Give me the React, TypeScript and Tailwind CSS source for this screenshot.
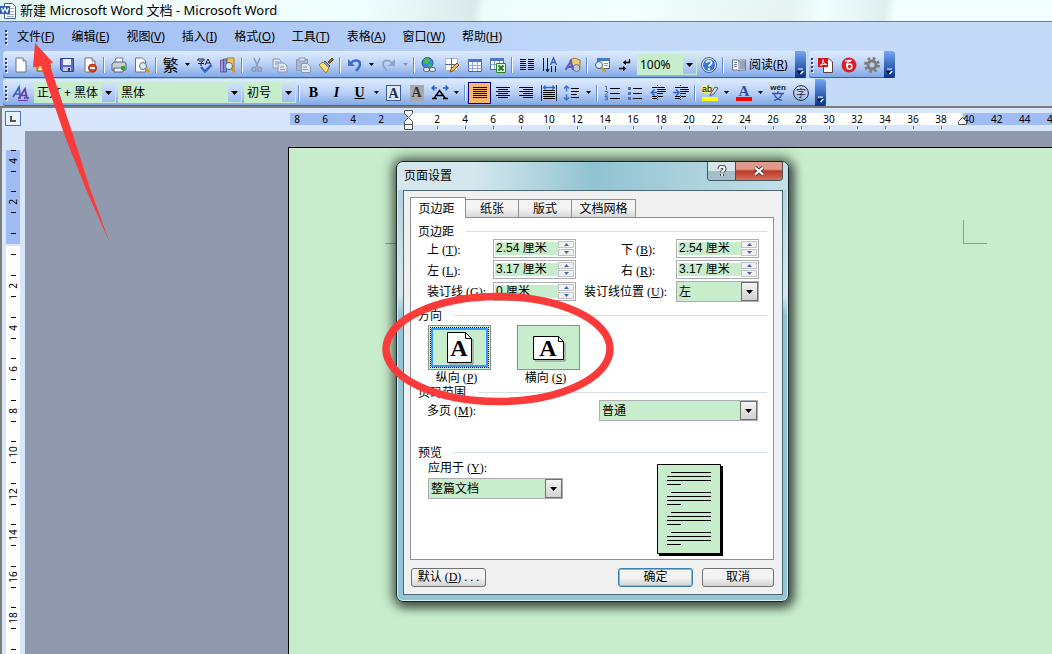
import { useState } from "react";
import type { ReactNode } from "react";

const menus = [
  ["文件", "F"],
  ["编辑", "E"],
  ["视图", "V"],
  ["插入", "I"],
  ["格式", "O"],
  ["工具", "T"],
  ["表格", "A"],
  ["窗口", "W"],
  ["帮助", "H"],
];

const leftMarks = [8, 6, 4, 2];
const textMarks = Array.from({ length: 19 }, (_, i) => (i + 1) * 2);
const rightMarks = [40, 42, 44, 46];
const pageMarks = Array.from({ length: 9 }, (_, i) => (i + 1) * 2);

function Svg({ children }: { children: ReactNode }) {
  return (
    <svg viewBox="0 0 16 16" className="h-4 w-4 shrink-0 overflow-visible" fill="none" aria-hidden="true">
      {children}
    </svg>
  );
}

function Tool({ label, active, children }: { label: string; active?: boolean; children: ReactNode }) {
  return (
    <button
      type="button"
      aria-label={label}
      className={`flex h-[22px] w-[23px] shrink-0 items-center justify-center ${
        active ? "border border-[#000080] bg-[#ffb668]" : ""
      }`}
    >
      <Svg>{children}</Svg>
    </button>
  );
}

function More({ label, dim }: { label: string; dim?: boolean }) {
  return (
    <button type="button" aria-label={label} className="flex h-[22px] w-[11px] shrink-0 items-center justify-center">
      <svg viewBox="0 0 5 3" className="h-[3px] w-[5px]" aria-hidden="true">
        <path d="M0 0h5L2.500 3z" fill={dim ? "#8a93a3" : "#000"} />
      </svg>
    </button>
  );
}

function Sep() {
  return (
    <span className="flex w-[6px] shrink-0 justify-center">
      <span className="h-4 w-px bg-[#6a8ccb]" />
      <span className="h-4 w-px bg-[#f1f6ff]" />
    </span>
  );
}

function Grip() {
  return (
    <span className="flex w-[6px] shrink-0 flex-col items-center gap-[2px]">
      {[0, 1, 2, 3].map((i) => (
        <span key={i} className="h-[2px] w-[2px] bg-[#27417a] shadow-[1px_1px_0_#fff]" />
      ))}
    </span>
  );
}

function EndCap() {
  return (
    <button
      type="button"
      aria-label="工具栏选项"
      className="flex h-[27px] w-[11px] shrink-0 items-end justify-center rounded-r-[3px] bg-linear-to-b from-[#76a7f2] to-[#05328c] pb-[3px]"
    >
      <svg viewBox="0 0 7 7" className="h-[7px] w-[7px]" aria-hidden="true">
        <path d="M1 1h5" stroke="#fff" />
        <path d="M1 3h6L4 6.500z" fill="#fff" />
        <path d="M0 3h5L2.500 6z" fill="#000" />
      </svg>
    </button>
  );
}

function Bar({ children }: { children: ReactNode }) {
  return (
    <div
      role="toolbar"
      className="flex h-[27px] shrink-0 items-center rounded-l-[3px] bg-linear-to-b from-[#dfebfe] via-[#b9d1f7] to-[#7da5e4] shadow-[inset_0_-1px_0_#3b61a6]"
    >
      {children}
    </div>
  );
}

function BarSelect({ label, value, width }: { label: string; value: string; width: string }) {
  return (
    <span className={`relative flex h-[21px] shrink-0 border border-[#c7edcc] bg-[#c7edcc] ${width}`}>
      <select
        aria-label={label}
        className="h-full min-w-0 flex-1 appearance-none overflow-hidden bg-transparent pl-[2px] text-xs whitespace-nowrap outline-none"
      >
        <option>{value}</option>
      </select>
      <span className="pointer-events-none flex w-[13px] shrink-0 items-center justify-center bg-linear-to-b from-[#d2e2fb] to-[#9dbdf0]">
        <svg viewBox="0 0 7 4" className="h-1 w-[7px]" aria-hidden="true">
          <path d="M0 0h7L3.500 4z" fill="#000" />
        </svg>
      </span>
    </span>
  );
}

function Sheet() {
  return (
    <>
      <path d="M3 1h7l3 3v11H3z" fill="#fff" stroke="#6f7480" />
      <path d="M10 1v3h3" stroke="#6f7480" fill="#dfe5ee" />
    </>
  );
}

function Lines({ rows }: { rows: number[][] }) {
  return (
    <>
      {rows.map(([x, y, w]) => (
        <path key={`${x}-${y}`} d={`M${x} ${y}.5h${w}`} stroke="#000" />
      ))}
    </>
  );
}

function Lens() {
  return (
    <>
      <path d="M11.500 11.500l3.500 3.500" stroke="#d8932c" strokeWidth="2.500" />
      <circle cx="9" cy="9" r="3.500" fill="#d3effc" stroke="#5b6b80" />
    </>
  );
}

function StandardBar() {
  return (
    <Bar>
      <Grip />
      <Tool label="新建">
        <Sheet />
      </Tool>
      <Tool label="打开">
        <path d="M1 4h5l1 2h6v8H1z" fill="#e8b850" stroke="#9a6b18" />
        <path d="M3 8h12l-2 6H1z" fill="#ffdf86" stroke="#9a6b18" />
      </Tool>
      <Tool label="保存">
        <path d="M1.500 1.500h13v13h-11l-2-2z" fill="#5d6bd0" stroke="#343f91" />
        <path d="M4 2h8v6H4z" fill="#eef1ff" />
        <path d="M4 10h8v4H4z" fill="#c8cbe0" />
        <path d="M9 11h2v3H9z" fill="#2a3470" />
      </Tool>
      <Tool label="权限">
        <Sheet />
        <circle cx="10.500" cy="11" r="4" fill="#e5481c" stroke="#b22b0a" />
        <path d="M8 11h5" stroke="#fff" strokeWidth="2" />
      </Tool>
      <Sep />
      <Tool label="打印">
        <path d="M5 1h7l-1 6H3z" fill="#fff" stroke="#758297" />
        <path d="M1 7l2-2h11l1 2v6H1z" fill="#c7cfda" stroke="#56637a" />
        <path d="M3 11h9v4H3z" fill="#eef3f7" stroke="#56637a" />
        <path d="M10 9h4v4h-4z" fill="#35a635" />
      </Tool>
      <Tool label="打印预览">
        <path d="M1.500 1h7l3 3v11h-10z" fill="#fff" stroke="#6f7480" />
        <Lens />
      </Tool>
      <Sep />
      <button type="button" className="h-[22px] w-[23px] shrink-0 text-base leading-[20px]">
        繁
      </button>
      <More label="中文转换" />
      <Tool label="拼写和语法">
        <path d="M1 2h6M1 2v2M7 2v2M2 4h4L4 6v3M1 6.500h6M8 8l3-6 3 6M9 6h4" stroke="#1a1a2a" />
        <path d="M4 10l4 4.500L14.500 8" stroke="#3767c6" strokeWidth="2.500" />
      </Tool>
      <Tool label="信息检索">
        <path d="M0.500 3h3v12h-3z" fill="#a894dc" stroke="#6c58a8" />
        <path d="M3.500 2h3v13h-3z" fill="#7e8fe0" stroke="#4b57a0" />
        <path d="M7 1h7v11H7z" fill="#efc25a" stroke="#a77a20" />
        <Lens />
      </Tool>
      <Sep />
      <Tool label="剪切">
        <path d="M5 1l4 9M11 1L7 10" stroke="#8b98b0" strokeWidth="1.500" />
        <circle cx="5" cy="12.500" r="2" stroke="#8b98b0" strokeWidth="1.500" />
        <circle cx="10.500" cy="12.500" r="2" stroke="#8b98b0" strokeWidth="1.500" />
      </Tool>
      <Tool label="复制">
        <path d="M1 2h6l2 2v7H1z" fill="#dce5f3" stroke="#8b98b0" />
        <path d="M6 6h6l3 3v6H6z" fill="#dce5f3" stroke="#8b98b0" />
        <path d="M3 5h4M3 7h2M8 10h4M8 12.500h5" stroke="#8b98b0" />
      </Tool>
      <Tool label="粘贴">
        <path d="M1.500 2.500h11v11h-11z" fill="#a9b6cb" stroke="#8b98b0" />
        <path d="M4 1h6v3H4z" fill="#dce5f3" stroke="#8b98b0" />
        <path d="M6.500 6.500h6l3 3v6h-9z" fill="#dce5f3" stroke="#8b98b0" />
        <path d="M8 10h4M8 12.500h5" stroke="#8b98b0" />
      </Tool>
      <Tool label="格式刷">
        <path d="M10 5l4-4 1.500 1.500-4 4z" fill="#9c6b35" stroke="#5b3a18" />
        <path d="M7 4l5 5-2 2-5-5z" fill="#8d93c4" stroke="#4f5487" />
        <path d="M5 5l6 6-3 5-7-8z" fill="#ffe06c" stroke="#a47a1a" />
      </Tool>
      <Sep />
      <Tool label="撤消">
        <path d="M4 6c3-4 9-3 9 1 0 3-2 5-4 7" stroke="#3b6dd0" strokeWidth="2.500" />
        <path d="M1 2v7h7z" fill="#3b6dd0" />
      </Tool>
      <More label="撤消列表" />
      <Tool label="恢复">
        <path d="M11 6C8 2 2 3 2 7c0 3 2 5 4 7" stroke="#93a5c6" strokeWidth="2" />
        <path d="M14 2v7H7z" fill="#93a5c6" />
      </Tool>
      <More label="恢复列表" dim />
      <Sep />
      <Tool label="超链接">
        <circle cx="6.500" cy="6" r="5.500" fill="#388ad8" stroke="#24609b" />
        <path d="M3 2l4-1 2 3-3 3-3-1zM7 8l4-1-2 4z" fill="#4eba4e" />
        <rect x="2.500" y="10.500" width="6" height="4" rx="2" fill="#e4e8ee" stroke="#4f5d70" />
        <rect x="8.500" y="10.500" width="6" height="4" rx="2" fill="#e4e8ee" stroke="#4f5d70" />
      </Tool>
      <Tool label="表格和边框">
        <path d="M1.500 1.500h12v12h-12z" fill="#fff" stroke="#aab4c5" />
        <path d="M7.500 1.500v12M1.500 7.500h12" stroke="#59657a" />
        <path d="M13 6l2 2-6 6-3 1 1-3z" fill="#f2b84d" stroke="#86551b" />
      </Tool>
      <Tool label="插入表格">
        <path d="M1.500 2.500h13v12h-13z" fill="#fff" stroke="#4469ac" />
        <path d="M1 2h14v3H1z" fill="#4b77c8" />
        <path d="M1.500 8.500h13M1.500 11.500h13M5.500 5v9M10.500 5v9" stroke="#8aa5d6" />
      </Tool>
      <Tool label="插入 Excel 工作表">
        <path d="M0.500 1.500h13v11h-13z" fill="#fff" stroke="#4469ac" />
        <path d="M0 1h14v3H0z" fill="#4b77c8" />
        <path d="M0.500 7.500h13M4.500 4v8M9.500 4v8" stroke="#8aa5d6" />
        <path d="M6.500 6.500h9v9h-9z" fill="#e5f5df" stroke="#2c812c" />
        <path d="M8.500 8.500l5 5M13.500 8.500l-5 5" stroke="#1f7a22" strokeWidth="2" />
      </Tool>
      <Sep />
      <Tool label="分栏">
        <Lines
          rows={[2, 4, 6, 8, 10, 12].flatMap((y) => [
            [1, y, 6],
            [9, y, 6],
          ])}
        />
      </Tool>
      <Tool label="更改文字方向">
        <path d="M1.500 1v13M5.500 1v13M9.500 9v6M13.500 9v6M4 12l1.500 3 1.500-3" stroke="#111" />
        <path d="M8.500 8l3-7 3 7M9.500 5.500h4" stroke="#3a5da8" strokeWidth="1.300" />
      </Tool>
      <Tool label="绘图">
        <path d="M5 3l4-2 6 2v8l-4 2-6-3z" fill="#f3cb72" stroke="#9b7730" />
        <circle cx="11.500" cy="11" r="3.500" fill="#bfc9d9" stroke="#667389" />
        <path d="M0.500 13L6 4l2 9M2 10h5.500" stroke="#5b5bd0" strokeWidth="2" />
      </Tool>
      <Sep />
      <Tool label="文档结构图">
        <path d="M3.500 1.500h12v10h-12z" fill="#fff" stroke="#4469ac" />
        <path d="M3 1h13v3H3z" fill="#4b77c8" />
        <path d="M10 6.500h4M10 8.500h4" stroke="#7c93bd" />
        <circle cx="5" cy="8" r="3.500" fill="#d3effc" stroke="#4d617c" />
        <path d="M7.500 10.500l4 4" stroke="#d8932c" strokeWidth="2.500" />
      </Tool>
      <Tool label="显示/隐藏编辑标记">
        <path d="M12.500 2v3.500h-4M2 11.500h5" stroke="#000" strokeWidth="1.300" />
        <path d="M9 3v5L5.500 5.500zM6 9v5l3.500-2.500z" fill="#000" />
      </Tool>
      <span className="w-px shrink-0" />
      <BarSelect label="显示比例" value="100%" width="w-[60px]" />
      <Tool label="帮助">
        <circle cx="8" cy="8" r="6.500" fill="#3b78d8" stroke="#fff" />
        <circle cx="8" cy="8" r="7.500" stroke="#3767b8" />
        <path d="M5.500 6c0-3 5-3 5 0 0 1.500-2.500 1.500-2.500 3.500M8 11v2" stroke="#fff" strokeWidth="1.700" />
      </Tool>
      <Sep />
      <button type="button" className="flex h-[22px] shrink-0 items-center gap-[2px] pr-[7px] pl-[5px] text-xs whitespace-nowrap">
        <Svg>
          <path d="M1.500 3h5L8 4l1.500-1h5v10h-5L8 14l-1.500-1h-5z" fill="#fff" stroke="#68758b" />
          <path d="M8 4v10M3 5.500h3M3 7.500h3M3 9.500h3" stroke="#68758b" />
          <path d="M9 4h5v8H9z" fill="#98a4b6" />
        </Svg>
        <span>
          阅读(<u>R</u>)
        </span>
      </button>
      <EndCap />
    </Bar>
  );
}

function PdfBar() {
  return (
    <Bar>
      <Grip />
      <Tool label="PDF">
        <path d="M5.500 2h6l3 3v10.500h-9z" fill="#fff" stroke="#5c3e3e" />
        <path d="M0 1h10v9H0z" fill="#d4131b" />
        <path d="M2 8.500c3-1 3-4 3-6 0 3 1 4 3.500 5-2-.5-4 0-6.500 1z" stroke="#fff" />
      </Tool>
      <Tool label="转换">
        <circle cx="8" cy="8" r="7.500" fill="#dc1f2b" />
        <path d="M4 4c2 0 4-1 7-.5M10 4C6 4 5 7 6 10" stroke="#fff" strokeWidth="1.200" />
        <circle cx="8.500" cy="9.500" r="2.500" stroke="#fff" strokeWidth="1.400" />
      </Tool>
      <Tool label="设置">
        <circle cx="8" cy="8" r="4" stroke="#7d7d7d" strokeWidth="3" />
        <circle cx="8" cy="8" r="6.500" stroke="#7d7d7d" strokeWidth="3" strokeDasharray="2.600 2.500" />
      </Tool>
      <EndCap />
    </Bar>
  );
}

function FormatBar() {
  return (
    <Bar>
      <Grip />
      <Tool label="样式和格式">
        <path d="M0 12L6 2l1 9M2 9h5" stroke="#3a62c0" strokeWidth="1.700" />
        <path d="M6 13l6-9 2 9M8 10.500h5.500M5 13h3M11 13h5" stroke="#6a3aa8" strokeWidth="1.700" />
        <path d="M5 15.500h10" stroke="#6a3aa8" />
      </Tool>
      <div className="flex gap-[2px] pl-[2px]">
        <BarSelect label="样式" value="正文 + 黑体" width="w-[82px]" />
        <BarSelect label="字体" value="黑体" width="w-[124px]" />
        <BarSelect label="字号" value="初号" width="w-[52px]" />
      </div>
      <Sep />
      <button type="button" className="h-[22px] w-[23px] shrink-0 font-['Liberation_Serif',serif] text-sm font-bold">
        B
      </button>
      <button type="button" className="h-[22px] w-[23px] shrink-0 font-['Liberation_Serif',serif] text-sm font-bold italic">
        I
      </button>
      <button type="button" className="h-[22px] w-[23px] shrink-0 font-['Liberation_Serif',serif] text-sm font-bold underline">
        U
      </button>
      <More label="下划线" />
      <button type="button" aria-label="字符边框" className="flex w-[23px] shrink-0 justify-center">
        <span className="h-4 w-[15px] border border-[#3f5f91] bg-[#dbe8fb] font-['Liberation_Serif',serif] text-sm leading-[15px] font-bold text-[#26304a]">
          A
        </span>
      </button>
      <button type="button" aria-label="字符底纹" className="flex w-[23px] shrink-0 justify-center">
        <span className="h-4 w-[14px] bg-[#a9a9a9] font-['Liberation_Serif',serif] text-sm leading-4 font-bold text-[#333]">A</span>
      </button>
      <Tool label="字符缩放">
        <path d="M2 13.500l5.500-8 6 8M5 10.500h6M0 13.500h5M11 13.500h5" stroke="#000" strokeWidth="1.500" />
        <path d="M0 3h5M11 3h5M2.500 0.500L0 3l2.500 2.500M13.500 0.500L16 3l-2.500 2.500" stroke="#1f5ed0" strokeWidth="1.300" />
      </Tool>
      <More label="字符缩放列表" />
      <Sep />
      <Tool label="两端对齐" active>
        <Lines rows={[2, 4, 6, 8, 10, 12].map((y) => [1, y, 14])} />
      </Tool>
      <Tool label="居中">
        <Lines rows={[[1, 2, 14], [3, 4, 10], [1, 6, 14], [3, 8, 10], [1, 10, 14], [3, 12, 10]]} />
      </Tool>
      <Tool label="右对齐">
        <Lines rows={[[1, 2, 14], [5, 4, 10], [1, 6, 14], [5, 8, 10], [1, 10, 14], [5, 12, 10]]} />
      </Tool>
      <Tool label="分散对齐">
        <path d="M0.500 0v16M15.500 0v16" stroke="#26324d" />
        <path d="M2 2.500h12M4.500 0.500l-2 2 2 2M11.500 0.500l2 2-2 2" stroke="#2f67d2" strokeWidth="1.300" />
        <Lines rows={[5, 7, 9, 11, 13].map((y) => [2, y, 12])} />
      </Tool>
      <Tool label="行距">
        <path d="M2.500 1v5.500M2.500 9.500V15M0 3.500L2.500 1 5 3.500M0 12.500L2.500 15 5 12.500" stroke="#3e6fca" strokeWidth="1.500" />
        <Lines rows={[[7, 3, 8], [7, 6, 8], [7, 9, 6], [7, 12, 8]]} />
      </Tool>
      <More label="行距列表" />
      <Sep />
      <Tool label="编号">
        <path d="M1 1.500h1.500V5M0.500 6.500h3v1.500L1 10h3M0.500 11.500h3V15h-3M1 13h2.500" stroke="#4a72bd" />
        <Lines rows={[[6, 3, 10], [6, 8, 10], [6, 13, 10]]} />
      </Tool>
      <Tool label="项目符号">
        <path d="M1 2h3v3H1zM1 7h3v3H1zM1 12h3v3H1z" fill="#4a72bd" />
        <Lines rows={[[6, 3, 9], [6, 8, 9], [6, 13, 9]]} />
      </Tool>
      <Tool label="减少缩进量">
        <Lines rows={[[2, 2, 5], [8, 2, 7], [8, 4, 8], [8, 6, 8], [8, 8, 5], [2, 11, 5], [8, 11, 5], [2, 13, 5]]} />
        <path d="M7.500 0v16" stroke="#333" strokeDasharray="1 1" />
        <path d="M7 7.500H2M4.500 4.500l-3 3 3 3" stroke="#2f67d2" strokeWidth="1.700" />
      </Tool>
      <Tool label="增加缩进量">
        <Lines rows={[[2, 2, 5], [8, 2, 7], [8, 4, 8], [8, 6, 8], [8, 8, 5], [2, 11, 5], [8, 11, 5], [2, 13, 5]]} />
        <path d="M7.500 0v16" stroke="#333" strokeDasharray="1 1" />
        <path d="M0 7.500h5M3 4.500l3 3-3 3" stroke="#2f67d2" strokeWidth="1.700" />
      </Tool>
      <Sep />
      <Tool label="突出显示">
        <path d="M0 0h9v8H0z" fill="#f7ef84" />
        <text x="0" y="7" fontSize="9" fontFamily="Liberation Sans" fill="#000">ab</text>
        <path d="M9 8l4-6 3 1-4 6-4 2z" fill="#d5dce8" stroke="#4c5e84" />
        <path d="M0 12h16v4H0z" fill="#ffff00" />
      </Tool>
      <More label="突出显示颜色" />
      <Tool label="字体颜色">
        <text x="8" y="11" fontSize="15" fontWeight="bold" fontFamily="Liberation Serif" textAnchor="middle" fill="#2f4fa0">A</text>
        <path d="M0 12h16v4H0z" fill="#ff0000" />
      </Tool>
      <More label="字体颜色列表" />
      <Tool label="拼音指南">
        <text x="8" y="5" fontSize="8" fontWeight="bold" fontFamily="Liberation Sans" textAnchor="middle" fill="#222">wén</text>
        <path d="M2 8.500h12M8 6v2.500M4 9c1 3 4 5.500 8 6.500M12 9c-1 3-4 5.500-8 6.500" stroke="#3a50b0" strokeWidth="1.300" />
      </Tool>
      <Tool label="带圈字符">
        <circle cx="8" cy="8" r="7.400" stroke="#1b2333" />
        <text x="8" y="12" fontSize="10" fontFamily="Noto Sans CJK SC" textAnchor="middle" fill="#1b2333">字</text>
      </Tool>
      <span className="w-[3px]" />
      <EndCap />
    </Bar>
  );
}

function HorizontalRuler() {
  return (
    <div className="flex h-[23px] shrink-0 overflow-hidden bg-[#d8e6fb] text-[10px] leading-3">
      <div className="w-[288px] shrink-0 pt-[3px] pl-[3px]">
        <button type="button" aria-label="制表符" className="flex h-[15px] w-4 items-center justify-center border border-[#4a78c4] bg-[#e8f1fd]">
          <svg viewBox="0 0 6 6" className="h-[6px] w-[6px]" aria-hidden="true">
            <path d="M1 0v5h5" stroke="#555" strokeWidth="2" fill="none" />
          </svg>
        </button>
      </div>
      <div className="mt-[5px] flex h-3 w-[118px] shrink-0 justify-end bg-[#9fbcf4] pr-[13px]">
        {leftMarks.map((n) => (
          <span key={n} className="w-7 shrink-0 text-center first:w-5 first:pr-2">{n}</span>
        ))}
      </div>
      <div className="relative mt-[5px] flex w-[553px] shrink-0 pl-[15px]">
        <div className="absolute inset-x-0 top-0 h-3 bg-white" />
        <svg viewBox="0 0 9 21" className="absolute -top-[3px] -left-1 h-[21px] w-[9px]" aria-hidden="true">
          <path d="M0.500 0.500h8v3l-4 4-4-4zM0.500 14.500v-3l4-4 4 4v3zM0.500 14.500h8v5h-8z" fill="#f4f4f4" stroke="#555" />
        </svg>
        <svg viewBox="0 0 9 8" className="absolute top-[4px] -right-[6px] z-10 h-2 w-[9px]" aria-hidden="true">
          <path d="M0.500 7.500v-3l4-4 4 4v3z" fill="#f4f4f4" stroke="#555" />
        </svg>
        {textMarks.map((n) => (
          <span key={n} className="relative flex w-7 shrink-0 flex-col items-center">
            <span>{n}</span>
            <span className="mt-px h-[3px] w-px bg-[#777]" />
          </span>
        ))}
      </div>
      <div className="mt-[5px] ml-[2px] flex h-3 min-w-0 flex-1 overflow-hidden bg-[#9fbcf4]">
        {rightMarks.map((n) => (
          <span key={n} className="w-7 shrink-0">{n}</span>
        ))}
      </div>
    </div>
  );
}

function VerticalMark({ n }: { n: number }) {
  return (
    <div className="flex w-full shrink-0 flex-col items-center justify-center odd:h-[41px] even:h-[42px]">
      <span className="h-px w-[5px] bg-black" />
      <span className="flex h-5 -rotate-90 items-center text-[10px] leading-3">{n}</span>
      <span className="h-px w-[5px] bg-black" />
    </div>
  );
}

function VerticalRuler() {
  return (
    <div className="flex w-[23px] shrink-0 flex-col overflow-hidden bg-[#d8e6fb] pt-[19px] pr-[5px] pl-[4px]">
      <div className="flex h-[94px] shrink-0 flex-col items-center justify-end overflow-hidden bg-[#9fbcf4]">
        <VerticalMark n={4} />
        <VerticalMark n={2} />
        <span className="mt-[10px] mb-[10px] h-px w-[5px] shrink-0 bg-black" />
      </div>
      <div className="mt-[2px] flex min-h-0 flex-1 flex-col items-center overflow-hidden bg-white">
        <span className="mt-2 mb-[10px] h-px w-[5px] shrink-0 bg-black" />
        {pageMarks.map((n) => (
          <VerticalMark key={n} n={n} />
        ))}
        <span className="mt-[10px] h-px w-[5px] shrink-0 bg-black" />
      </div>
    </div>
  );
}

function Key({ k, tail = ":" }: { k: string; tail?: string }) {
  return (
    <span className="pl-[3px] font-['Liberation_Serif',serif]">
      (<u>{k}</u>){tail}
    </span>
  );
}

function Legend({ children }: { children: ReactNode }) {
  return (
    <div className="flex h-4 items-center gap-3">
      <span className="shrink-0 pt-[2px]">{children}</span>
      <span className="h-px flex-1 bg-[#d5dfe8]" />
    </div>
  );
}

function Spinner({ id, initial }: { id: string; initial: string }) {
  const [value, setValue] = useState(initial);
  return (
    <span className="flex h-[19px] w-[83px] border border-[#abadb3] bg-white p-px">
      <input
        id={id}
        value={value}
        onChange={(e) => setValue(e.target.value)}
        className="h-[13px] min-w-0 flex-1 self-center bg-[#c7edcc] pl-px text-xs leading-[13px] outline-none"
      />
      <span className="flex w-4 shrink-0 flex-col gap-px">
        {["M0 3L2.500 0 5 3z", "M0 0h5L2.500 3z"].map((d, i) => (
          <button
            key={d}
            type="button"
            aria-label={i === 0 ? "增加" : "减少"}
            className="flex flex-1 items-center justify-center border border-[#c3c4c8] bg-[#f1f1f1]"
          >
            <svg viewBox="0 0 5 3" className="h-[3px] w-[5px]" aria-hidden="true">
              <path d={d} fill="#4b62b8" />
            </svg>
          </button>
        ))}
      </span>
    </span>
  );
}

function DialogSelect({ id, options, width }: { id: string; options: string[]; width: string }) {
  return (
    <span className={`relative flex h-[21px] border border-[#abadb3] bg-[#c7edcc] ${width}`}>
      <select id={id} className="h-full min-w-0 flex-1 appearance-none bg-transparent pl-[2px] text-xs outline-none">
        {options.map((o) => (
          <option key={o}>{o}</option>
        ))}
      </select>
      <span className="pointer-events-none flex w-[17px] shrink-0 items-center justify-center border border-[#707070] bg-linear-to-b from-[#f4f4f4] to-[#d2d2d2]">
        <svg viewBox="0 0 7 4" className="h-1 w-[7px]" aria-hidden="true">
          <path d="M0 0h7L3.500 4z" fill="#000" />
        </svg>
      </span>
    </span>
  );
}

function Orientation({
  wide,
  selected,
  onSelect,
  children,
}: {
  wide?: boolean;
  selected: boolean;
  onSelect: () => void;
  children: ReactNode;
}) {
  return (
    <button type="button" aria-pressed={selected} onClick={onSelect} className="flex w-[63px] flex-col">
      <span className="flex h-[45px] w-full border border-[#8c9096] bg-[#c7edcc] p-px">
        <span className={`flex flex-1 border border-dotted ${selected ? "border-black" : "border-transparent"}`}>
          <span className={`flex flex-1 items-center justify-center border-2 ${selected ? "border-[#3399ff]" : "border-transparent"}`}>
            <svg viewBox="0 0 34 34" className="h-[34px] w-[34px]" aria-hidden="true">
              {wide ? (
                <>
                  <path d="M3 30h30V12" stroke="#888" fill="none" />
                  <path d="M1.500 5.500h25l5 5v18h-30z" fill="#fff" stroke="#000" />
                  <path d="M26.500 5.500v5h5" fill="none" stroke="#000" />
                </>
              ) : (
                <>
                  <path d="M6 33h24V8" stroke="#888" fill="none" />
                  <path d="M4.500 1.500h18l6 6v24h-24z" fill="#fff" stroke="#000" />
                  <path d="M22.500 1.500v6h6" fill="none" stroke="#000" />
                </>
              )}
              <text x="16" y="25" fontSize="24" fontWeight="bold" fontFamily="Liberation Serif" textAnchor="middle">
                A
              </text>
            </svg>
          </span>
        </span>
      </span>
      <span className="h-[14px] w-full pt-px pr-[6px] text-center leading-[14px]">{children}</span>
    </button>
  );
}

function PreviewSheet() {
  return (
    <svg viewBox="0 0 66 92" className="mt-1 h-[92px] w-[66px]" role="img" aria-label="预览">
      <path d="M2 2h64v90H2z" fill="#000" />
      <path d="M0.500 0.500h63v89h-63z" fill="#c7edcc" stroke="#000" />
      {[8, 28, 48, 68].map((y) => (
        <path
          key={y}
          d={`M14 ${y + 0.5}h40M10 ${y + 4.5}h44M10 ${y + 8.5}h44M10 ${y + 12.5}h14`}
          stroke="#000"
        />
      ))}
    </svg>
  );
}

const tabs = [
  ["页边距", "w-[56px]"],
  ["纸张", "w-[54px]"],
  ["版式", "w-[54px]"],
  ["文档网格", "w-[65px]"],
];

const dialogButton =
  "h-[19px] rounded-[3px] border bg-linear-to-b from-[#f4f4f4] from-50% to-[#d4d4d4] to-100% text-center leading-[17px]";

function PageSetupDialog() {
  const [portrait, setPortrait] = useState(true);
  return (
    <section
      role="dialog"
      aria-label="页面设置"
      className="absolute top-[161px] left-[396px] w-[393px] rounded-[7px] border border-[#17242b] bg-linear-to-b from-[#a9cdd9] via-[#d7e8ee] via-30% to-[#93c4d5] to-35% pr-[5px] pb-[6px] pl-[6px] font-['Liberation_Sans','Noto_Sans_CJK_SC',sans-serif] text-xs shadow-[inset_0_0_0_1px_#d9f0f7,0_0_12px_4px_rgba(0,0,0,0.5),3px_4px_10px_2px_rgba(0,0,0,0.4)]"
    >
      <header className="-mx-[5px] flex h-7 items-start justify-between rounded-t-md bg-linear-to-r from-[#d3e7ed] from-20% via-[#91c3d3] via-50% to-[#c5dfe7] pr-[5px] pl-[6px]">
        <h2 className="pt-[6px] leading-4">页面设置</h2>
        <div className="flex h-[19px] overflow-hidden rounded-b-[4px] border border-t-0 border-[#42545d]">
          <button
            type="button"
            aria-label="帮助"
            className="flex w-7 items-center justify-center border-r border-[#42545d] bg-linear-to-b from-[#d7e5ea] from-50% to-[#a4bfc9] to-50%"
          >
            <svg viewBox="0 0 10 12" className="h-3 w-[10px]" fill="none" aria-hidden="true">
              <path d="M2.500 4c0-3 5-3 5 0 0 1.700-2.500 1.500-2.500 3.500M5 9v2" stroke="#3f4c55" strokeWidth="4" />
              <path d="M2.500 4c0-3 5-3 5 0 0 1.700-2.500 1.500-2.500 3.500M5 9v2" stroke="#fff" strokeWidth="2" />
            </svg>
          </button>
          <button
            type="button"
            aria-label="关闭"
            className="flex w-[46px] items-center justify-center bg-linear-to-b from-[#e09a8c] from-40% via-[#bd3621] via-50% to-[#d4705a]"
          >
            <svg viewBox="0 0 12 10" className="h-[10px] w-3" aria-hidden="true">
              <path d="M2 1.500l8 7M10 1.500l-8 7" stroke="#4a3a40" strokeWidth="4" />
              <path d="M2 1.500l8 7M10 1.500l-8 7" stroke="#fff" strokeWidth="2.200" />
            </svg>
          </button>
        </div>
      </header>
      <div className="border border-[#4d6873] bg-[#f0f0f0] pt-[6px] pr-[8px] pb-[7px] pl-[6px]">
        <div role="tablist" className="flex h-[20px] items-end">
          {tabs.map(([name, width], i) => (
            <button
              key={name}
              type="button"
              role="tab"
              aria-selected={i === 0}
              className={`shrink-0 border border-b-0 border-[#8c8e96] text-center ${width} ${
                i === 0
                  ? "relative top-px h-[21px] bg-white pr-[3px] leading-[22px]"
                  : "-ml-px h-[18px] bg-linear-to-b from-[#f4f4f4] from-50% to-[#d8d8d8] leading-[19px]"
              }`}
            >
              {name}
            </button>
          ))}
        </div>
        <div role="tabpanel" className="border border-[#8c8e96] bg-white pt-[5px] pr-[6px] pb-[3px] pl-[7px]">
          <Legend>页边距</Legend>
          <div className="grid grid-cols-[66px_83px_100px_83px] items-center gap-y-[2px] pl-[9px]">
            <label htmlFor="top" className="pt-[2px]">上<Key k="T" /></label>
            <Spinner id="top" initial="2.54 厘米" />
            <label htmlFor="bottom" className="pt-[2px] pl-[45px]">下<Key k="B" /></label>
            <Spinner id="bottom" initial="2.54 厘米" />
            <label htmlFor="left" className="pt-[2px]">左<Key k="L" /></label>
            <Spinner id="left" initial="3.17 厘米" />
            <label htmlFor="right" className="pt-[2px] pl-[45px]">右<Key k="R" /></label>
            <Spinner id="right" initial="3.17 厘米" />
            <label htmlFor="gutter" className="whitespace-nowrap">装订线<Key k="G" /></label>
            <Spinner id="gutter" initial="0 厘米" />
            <label htmlFor="gutter-side" className="pl-2 whitespace-nowrap">装订线位置<Key k="U" /></label>
            <DialogSelect id="gutter-side" options={["左", "上"]} width="w-[83px]" />
          </div>
          <div className="mt-[5px]">
            <Legend>方向</Legend>
          </div>
          <div className="flex gap-[26px] pt-[2px] pl-[10px]">
            <Orientation selected={portrait} onSelect={() => setPortrait(true)}>
              纵向<Key k="P" tail="" />
            </Orientation>
            <Orientation wide selected={!portrait} onSelect={() => setPortrait(false)}>
              横向<Key k="S" tail="" />
            </Orientation>
          </div>
          <Legend>页码范围</Legend>
          <div className="flex items-center justify-between pr-[9px] pl-[9px]">
            <label htmlFor="pages">多页<Key k="M" /></label>
            <DialogSelect id="pages" options={["普通", "对称页边距", "拼页", "书籍折页"]} width="w-[159px]" />
          </div>
          <div className="mt-[23px]">
            <Legend>预览</Legend>
          </div>
          <div className="flex gap-[94px] pl-[10px]">
            <div className="flex flex-col gap-[2px]">
              <label htmlFor="apply" className="h-4 leading-4">应用于<Key k="Y" /></label>
              <DialogSelect id="apply" options={["整篇文档", "插入点之后"]} width="w-[135px]" />
            </div>
            <PreviewSheet />
          </div>
        </div>
        <footer className="flex justify-between pt-2 pl-px">
          <button type="button" className={`${dialogButton} w-[75px] border-[#707070]`}>
            默认<Key k="D" tail=" . . ." />
          </button>
          <div className="flex gap-[9px]">
            <button type="button" className={`${dialogButton} w-[75px] border-[#3c7fb1] shadow-[inset_0_0_0_1px_#46d2f2]`}>
              确定
            </button>
            <button type="button" className={`${dialogButton} w-[72px] border-[#707070]`}>
              取消
            </button>
          </div>
        </footer>
      </div>
    </section>
  );
}

export default function App() {
  return (
    <div className="relative flex h-screen flex-col overflow-hidden bg-[#c4daf9] font-['Noto_Sans','Noto_Sans_CJK_SC',sans-serif] text-xs text-black">
      <header className="flex h-[22px] shrink-0 items-center gap-1 border-b border-[#6f7f86] bg-[linear-gradient(100deg,#dff6f3_0%,#f4fdfd_12%,#eefefe_35%,#dbe9eb_45%,#eefcfc_46%,#f2ffff_60%,#e6f2f2_75%,#f0ffff_78%,#dfeeee_84%,#f2ffff_85%)]">
        <Svg>
          <path d="M4.500 0.500h8l3 3v12h-11z" fill="#fff" stroke="#3d5f9c" />
          <path d="M10 5.500h4M10 8.500h4M7 11.500h7M7 13.500h7" stroke="#8fa8d4" />
          <path d="M0 3h10v8H0z" fill="#2f5fb4" />
          <path d="M1.500 5l1.500 4 2-4 2 4 1.500-4" stroke="#fff" strokeWidth="1.300" />
        </Svg>
        <h1 className="text-[13px] whitespace-nowrap">新建 Microsoft Word 文档 - Microsoft Word</h1>
      </header>
      <div className="shrink-0 bg-linear-to-r from-[#9ebcf4] to-[#c4daf9] to-60% pl-[3px]">
        <nav className="flex h-[29px] items-center">
          <Grip />
          <div className="flex gap-[17px] pl-2">
            {menus.map(([name, key]) => (
              <button key={name} type="button" className="shrink-0 whitespace-nowrap">
                {name}(<u>{key}</u>)
              </button>
            ))}
          </div>
        </nav>
        <div className="flex gap-[3px] pb-px">
          <StandardBar />
          <PdfBar />
        </div>
        <div className="flex">
          <FormatBar />
        </div>
      </div>
      <main className="flex min-h-0 flex-1 flex-col border-t-2 border-l-2 border-[#7d7d7d]">
        <HorizontalRuler />
        <div className="flex min-h-0 flex-1">
          <VerticalRuler />
          <div className="flex min-w-0 flex-1 bg-[#9199ae] pt-4 pl-[263px]">
            <article aria-label="文档" className="relative flex-1 border-t border-l border-black bg-[#c7edcc]">
              <span className="absolute top-[72px] left-24 h-6 w-6 border-r border-b border-[#86a58b]" />
              <span className="absolute top-[72px] left-[674px] h-6 w-6 border-b border-l border-[#86a58b]" />
            </article>
          </div>
        </div>
      </main>
      <PageSetupDialog />
      <svg viewBox="0 0 620 410" className="pointer-events-none absolute top-0 left-0 h-[410px] w-[620px]" aria-hidden="true">
        <path d="M35 43L53 62.500 49.500 64 73 135 89.500 187 109.500 242 85 187 64.500 135 41 66 33 67.500z" fill="#fb3b39" />
        <ellipse cx="498" cy="349" rx="112" ry="52.500" fill="none" stroke="#fb3b39" strokeWidth="7.500" />
      </svg>
    </div>
  );
}
